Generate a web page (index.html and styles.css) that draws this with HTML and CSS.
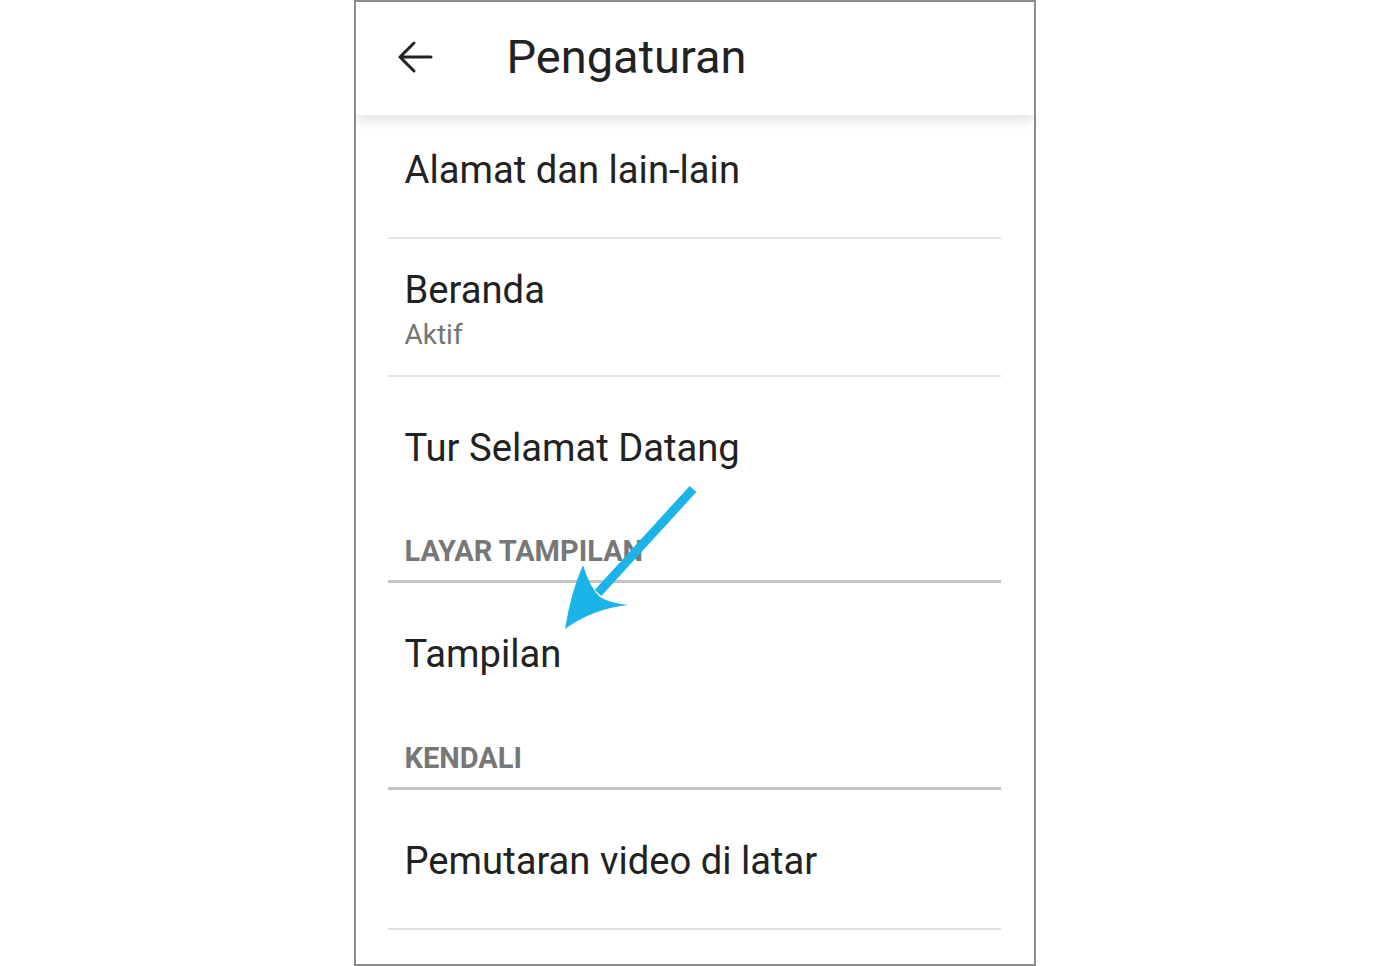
FILE: index.html
```html
<!DOCTYPE html>
<html lang="id">
<head>
    <meta charset="UTF-8">
    <meta name="viewport" content="width=device-width, initial-scale=1.0">
    <title>Pengaturan</title>
    <link rel="stylesheet" href="styles.css">
</head>
<body>
    <div class="phone">
        <header class="app-bar">
            <svg class="back" width="40" height="40" viewBox="0 0 40 40">
                <path d="M37 20H6 M20 6 L6 20 L20 34" fill="none" stroke="#212121" stroke-width="3" stroke-linecap="round" stroke-linejoin="round"/>
            </svg>
            <h1>Pengaturan</h1>
        </header>
        <div class="settings">
            <div class="item first">
                <div class="title">Alamat dan lain-lain</div>
            </div>
            <div class="item two-line">
                <div class="title">Beranda</div>
                <div class="summary">Aktif</div>
            </div>
            <div class="item plain">
                <div class="title">Tur Selamat Datang</div>
            </div>
            <div class="section">LAYAR TAMPILAN</div>
            <div class="item plain">
                <div class="title">Tampilan</div>
            </div>
            <div class="section">KENDALI</div>
            <div class="item last">
                <div class="title">Pemutaran video di latar</div>
            </div>
        </div>
    </div>

    <!-- annotation arrow drawn over the screenshot -->
    <svg class="pointer" width="1389" height="966" viewBox="0 0 1389 966">
        <line x1="693" y1="489" x2="598" y2="593" stroke="#1ab4e8" stroke-width="9"/>
        <path d="M565 629 Q571 592 583 565 Q590 588 600 597 Q610 603 628 605 Q592 609 565 629 Z" fill="#1ab4e8"/>
    </svg>
</body>
</html>
```

FILE: styles.css
```css
body {
    margin: 0;
    padding: 0;
    background-color: #ffffff;
    font-family: Roboto, "Liberation Sans", sans-serif;
    position: relative;
    height: 966px;
    overflow: hidden;
}
.phone {
    width: 678px;
    height: 962px;
    margin: 0 auto;
    border: 2px solid #8c8c8c;
    background: #ffffff;
    overflow: hidden;
}
.app-bar {
    height: 113px;
    display: flex;
    align-items: center;
    background: #ffffff;
    box-shadow: 0 5px 12px rgba(0, 0, 0, 0.12);
    position: relative;
    z-index: 1;
}
.app-bar .back {
    margin-left: 38px;
    margin-top: -4px;
}
.app-bar h1 {
    margin: -4px 0 0 73px;
    font-size: 47px;
    font-weight: 400;
    color: #222222;
}
.settings {
    display: flex;
    flex-direction: column;
}
.item {
    margin: 0 33px 0 32px;
    padding-left: 17px;
    display: flex;
    flex-direction: column;
}
.item .title {
    font-size: 38.2px;
    line-height: 44px;
    color: #222222;
}
.item .summary {
    font-size: 28px;
    line-height: 34px;
    color: #757575;
    margin-top: 6px;
}
.item.first {
    padding-top: 33px;
    padding-bottom: 45px;
    border-bottom: 2px solid #e3e3e3;
}
.item.two-line {
    padding-top: 29px;
    padding-bottom: 23px;
    border-bottom: 2px solid #e3e3e3;
}
.item.plain {
    padding-top: 49px;
    padding-bottom: 36px;
}
.section + .item.plain {
    padding-bottom: 37px;
}
.item.last {
    padding-top: 49px;
    padding-bottom: 45px;
    border-bottom: 2px solid #e3e3e3;
}
.section {
    margin: 0 33px 0 32px;
    padding: 27px 0 11px 17px;
    font-size: 29px;
    line-height: 36px;
    font-weight: 700;
    color: #777777;
    border-bottom: 3px solid #c4c4c4;
}
.pointer {
    position: absolute;
    top: 0;
    left: 0;
    pointer-events: none;
}
```
